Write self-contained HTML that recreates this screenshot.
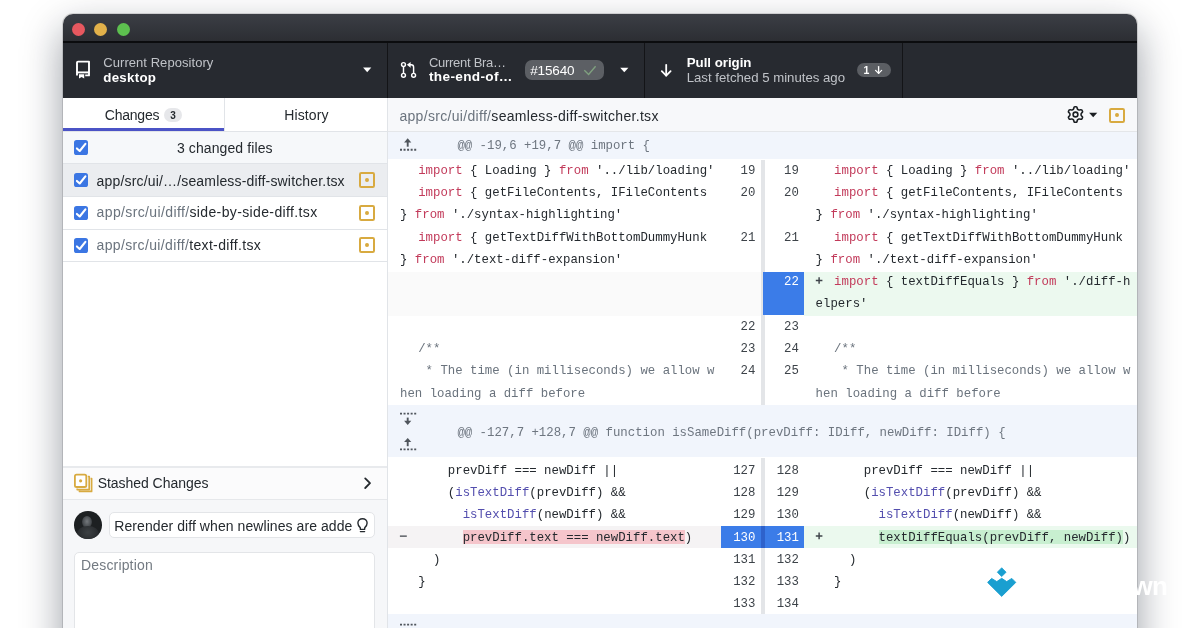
<!DOCTYPE html><html><head><meta charset="utf-8"><style>
html,body{margin:0;padding:0;background:#fff;width:1200px;height:628px;overflow:hidden;position:relative}
.t{position:absolute;white-space:pre;font-family:"Liberation Sans",sans-serif}
.m{font-family:"Liberation Mono",monospace}
.r{position:absolute}
svg{position:absolute;overflow:visible}
</style></head><body><div style="position:absolute;left:0;top:0;width:1200px;height:628px;overflow:hidden;will-change:transform">
<div class="r" style="left:63px;top:14px;width:1074px;height:700px;border-radius:10px 10px 0 0;box-shadow:0 0 0 1px rgba(0,0,0,0.12),0 16px 40px rgba(10,20,35,0.42);background:#fff"></div>
<div class="r" style="left:63px;top:14px;width:1074px;height:27px;border-radius:10px 10px 0 0;background:linear-gradient(#3b3e45,#2c2e33)"></div>
<div class="r" style="left:63.00px;top:41.00px;width:1074.00px;height:1.50px;background:#0b0c0e;"></div>
<div class="r" style="left:71.80px;top:22.90px;width:13px;height:13px;border-radius:50%;background:#e7585f"></div>
<div class="r" style="left:94.10px;top:22.90px;width:13px;height:13px;border-radius:50%;background:#e2b14a"></div>
<div class="r" style="left:116.50px;top:22.90px;width:13px;height:13px;border-radius:50%;background:#5dc04f"></div>
<div class="r" style="left:63.00px;top:42.50px;width:1074.00px;height:55.00px;background:#272a30;"></div>
<div class="r" style="left:386.50px;top:42.50px;width:1.00px;height:55.00px;background:#131417;"></div>
<div class="r" style="left:644.00px;top:42.50px;width:1.00px;height:55.00px;background:#131417;"></div>
<div class="r" style="left:902.00px;top:42.50px;width:1.00px;height:55.00px;background:#131417;"></div>
<div class="r" style="left:63.00px;top:97.50px;width:1074.00px;height:1.00px;background:#111215;"></div>
<svg style="left:0;top:0" width="1" height="1"><g fill="none" stroke="#fff" stroke-width="1.9" stroke-linejoin="round"><path d="M77 75.6 V62.6 Q77 61.6 78 61.6 H89 V75.4 H85.2"/><path d="M77 72.4 H89"/></g><path d="M79 74.2 H84.2 V78.6 L81.6 76.9 L79 78.6 Z" fill="#fff"/></svg>
<div class="t" style="left:103.30px;top:56.20px;font-size:13.00px;line-height:13.00px;color:#c0c3c8;font-weight:400;letter-spacing:0.053px;">Current Repository</div>
<div class="t" style="left:103.30px;top:70.84px;font-size:13.30px;line-height:13.30px;color:#fff;font-weight:700;letter-spacing:0.270px;">desktop</div>
<svg style="left:0;top:0" width="1" height="1"><path d="M363.10 67.60 L371.30 67.60 L367.20 72.20 Z" fill="#fff"/></svg>
<svg style="left:0;top:0" width="1" height="1"><g fill="none" stroke="#fff" stroke-width="1.45"><circle cx="403.5" cy="64.6" r="1.95"/><circle cx="403.5" cy="75.3" r="1.95"/><circle cx="413.6" cy="75.3" r="1.95"/><path d="M403.5 66.6 V73.3"/><path d="M413.6 73.3 V67.2 Q413.6 64.8 411.2 64.8 H409.6"/></g><path d="M406.9 64.8 L410.6 61.9 L410.6 67.7 Z" fill="#fff"/></svg>
<div class="t" style="left:429.00px;top:55.60px;font-size:13.00px;line-height:13.00px;color:#c0c3c8;font-weight:400;letter-spacing:-0.290px;">Current Bra…</div>
<div class="t" style="left:429.00px;top:70.49px;font-size:13.60px;line-height:13.60px;color:#fff;font-weight:700;letter-spacing:0.336px;">the-end-of…</div>
<div class="r" style="left:525px;top:60px;width:79px;height:20px;border-radius:7px;background:#5c5f64"></div>
<div class="t" style="left:530.20px;top:63.97px;font-size:13.50px;line-height:13.50px;color:#fff;font-weight:400;letter-spacing:-0.130px;">#15640</div>
<svg style="left:0;top:0" width="1" height="1"><path d="M584.3 70.3 L588.6 74.4 L595.6 66.2" fill="none" stroke="#7fa07f" stroke-width="1.4"/></svg>
<svg style="left:0;top:0" width="1" height="1"><path d="M620.20 67.70 L628.40 67.70 L624.30 72.30 Z" fill="#fff"/></svg>
<svg style="left:0;top:0" width="1" height="1"><g fill="none" stroke="#fff" stroke-width="1.8" stroke-linecap="round" stroke-linejoin="round"><path d="M666.2 64.8 V75.6"/><path d="M661.8 71.2 L666.2 75.6 L670.6 71.2"/></g></svg>
<div class="t" style="left:686.70px;top:56.24px;font-size:13.30px;line-height:13.30px;color:#fff;font-weight:700;letter-spacing:-0.020px;">Pull origin</div>
<div class="t" style="left:686.70px;top:70.73px;font-size:13.20px;line-height:13.20px;color:#c0c3c8;font-weight:400;letter-spacing:-0.002px;">Last fetched 5 minutes ago</div>
<div class="r" style="left:857.2px;top:62.9px;width:33.6px;height:14.2px;border-radius:8px;background:#5b5e63"></div>
<div class="t" style="left:863.60px;top:65.31px;font-size:10.50px;line-height:10.50px;color:#fff;font-weight:700;">1</div>
<svg style="left:0;top:0" width="1" height="1"><g fill="none" stroke="#fff" stroke-width="1.3" stroke-linecap="round" stroke-linejoin="round"><path d="M878.6 66.6 V73.4"/><path d="M875.6 70.4 L878.6 73.4 L881.6 70.4"/></g></svg>
<div class="r" style="left:63.00px;top:98.00px;width:324.00px;height:540.00px;background:#ffffff;"></div>
<div class="r" style="left:386.50px;top:98.00px;width:1.00px;height:540.00px;background:#e1e4e8;"></div>
<div class="r" style="left:224.30px;top:98.00px;width:1.00px;height:33.00px;background:#e1e4e8;"></div>
<div class="r" style="left:63.00px;top:130.50px;width:324.00px;height:1.00px;background:#e1e4e8;"></div>
<div class="r" style="left:63.00px;top:127.80px;width:161.00px;height:3.00px;background:#4b53c6;"></div>
<div class="t" style="left:104.80px;top:108.35px;font-size:14.00px;line-height:14.00px;color:#24292e;font-weight:400;letter-spacing:-0.224px;">Changes</div>
<div class="r" style="left:164.4px;top:108.4px;width:17.4px;height:13.6px;border-radius:7px;background:#e6e7ea"></div>
<div class="t" style="left:170.20px;top:111.13px;font-size:10.00px;line-height:10.00px;color:#24292e;font-weight:700;">3</div>
<div class="t" style="left:284.30px;top:108.35px;font-size:14.00px;line-height:14.00px;color:#24292e;font-weight:400;letter-spacing:0.090px;">History</div>
<div class="r" style="left:63.00px;top:131.50px;width:323.50px;height:32.00px;background:#f6f8fa;"></div>
<div class="r" style="left:63.00px;top:163.20px;width:323.50px;height:1.00px;background:#e1e4e8;"></div>
<div class="r" style="left:74.10px;top:140.30px;width:14px;height:14.4px;border-radius:2.6px;background:#3b76e3"></div>
<svg style="left:0;top:0" width="1" height="1"><path d="M76.90 148.40 L79.70 151.00 L85.40 143.90" fill="none" stroke="#fff" stroke-width="2.1" stroke-linecap="round" stroke-linejoin="round"/></svg>
<div class="t" style="left:176.90px;top:140.75px;font-size:14.00px;line-height:14.00px;color:#24292e;font-weight:400;letter-spacing:0.109px;">3 changed files</div>
<div class="r" style="left:63.00px;top:164.20px;width:323.50px;height:32.30px;background:#ebedf0;"></div>
<div class="r" style="left:63.00px;top:196.00px;width:323.50px;height:1.00px;background:#e1e4e8;"></div>
<div class="r" style="left:63.00px;top:228.50px;width:323.50px;height:1.00px;background:#e1e4e8;"></div>
<div class="r" style="left:63.00px;top:261.00px;width:323.50px;height:1.00px;background:#e1e4e8;"></div>
<div class="r" style="left:74.10px;top:172.80px;width:14px;height:14.4px;border-radius:2.6px;background:#3b76e3"></div>
<svg style="left:0;top:0" width="1" height="1"><path d="M76.90 180.90 L79.70 183.50 L85.40 176.40" fill="none" stroke="#fff" stroke-width="2.1" stroke-linecap="round" stroke-linejoin="round"/></svg>
<div class="t" style="left:96.60px;top:173.75px;font-size:14.00px;line-height:14.00px;font-weight:400;letter-spacing:0.166px;"><span style="color:#24292e">app/src/ui/…/seamless-diff-switcher.tsx</span></div>
<div class="r" style="left:358.60px;top:171.90px;width:16.80px;height:15.80px;box-sizing:border-box;border:2px solid #d8aa40;border-radius:2.2px"></div>
<div class="r" style="left:365.10px;top:177.90px;width:3.8px;height:3.8px;border-radius:50%;background:#d8aa40"></div>
<div class="r" style="left:74.10px;top:205.80px;width:14px;height:14.4px;border-radius:2.6px;background:#3b76e3"></div>
<svg style="left:0;top:0" width="1" height="1"><path d="M76.90 213.90 L79.70 216.50 L85.40 209.40" fill="none" stroke="#fff" stroke-width="2.1" stroke-linecap="round" stroke-linejoin="round"/></svg>
<div class="t" style="left:96.60px;top:205.45px;font-size:14.00px;line-height:14.00px;font-weight:400;letter-spacing:0.371px;"><span style="color:#6a737d">app/src/ui/diff/</span><span style="color:#24292e">side-by-side-diff.tsx</span></div>
<div class="r" style="left:358.60px;top:204.90px;width:16.80px;height:15.80px;box-sizing:border-box;border:2px solid #d8aa40;border-radius:2.2px"></div>
<div class="r" style="left:365.10px;top:210.90px;width:3.8px;height:3.8px;border-radius:50%;background:#d8aa40"></div>
<div class="r" style="left:74.10px;top:238.30px;width:14px;height:14.4px;border-radius:2.6px;background:#3b76e3"></div>
<svg style="left:0;top:0" width="1" height="1"><path d="M76.90 246.40 L79.70 249.00 L85.40 241.90" fill="none" stroke="#fff" stroke-width="2.1" stroke-linecap="round" stroke-linejoin="round"/></svg>
<div class="t" style="left:96.60px;top:237.75px;font-size:14.00px;line-height:14.00px;font-weight:400;letter-spacing:0.353px;"><span style="color:#6a737d">app/src/ui/diff/</span><span style="color:#24292e">text-diff.tsx</span></div>
<div class="r" style="left:358.60px;top:237.40px;width:16.80px;height:15.80px;box-sizing:border-box;border:2px solid #d8aa40;border-radius:2.2px"></div>
<div class="r" style="left:365.10px;top:243.40px;width:3.8px;height:3.8px;border-radius:50%;background:#d8aa40"></div>
<div class="r" style="left:63.00px;top:466.30px;width:323.50px;height:2.00px;background:#e8eaed;"></div>
<div class="r" style="left:63.00px;top:467.70px;width:323.50px;height:31.50px;background:#fbfbfc;"></div>
<div class="r" style="left:63.00px;top:499.00px;width:323.50px;height:1.00px;background:#e6e8eb;"></div>
<svg style="left:0;top:0" width="1" height="1"><g fill="none" stroke="#d8aa40" stroke-width="1.7" stroke-linejoin="round"><path d="M87.8 476.5 H89.2 V489.6 H77.2 V488.4"/><path d="M90.5 478.6 H91.6 V491.4 H79.5 V490.3"/></g><rect x="74.9" y="474.6" width="11.4" height="12.4" rx="1.6" fill="#fff" stroke="#d8aa40" stroke-width="1.8"/><circle cx="80.6" cy="480.8" r="1.6" fill="#d8aa40"/></svg>
<div class="t" style="left:97.70px;top:476.15px;font-size:14.00px;line-height:14.00px;color:#24292e;font-weight:400;letter-spacing:-0.043px;">Stashed Changes</div>
<svg style="left:0;top:0" width="1" height="1"><path d="M365.2 478.4 L370 483.2 L365.2 488" fill="none" stroke="#24292e" stroke-width="1.8" stroke-linecap="round" stroke-linejoin="round"/></svg>
<div class="r" style="left:63.00px;top:500.00px;width:323.50px;height:140.00px;background:#f6f7f9;"></div>
<div class="r" style="left:74px;top:511.2px;width:27.6px;height:27.6px;border-radius:50%;overflow:hidden;background:#1d2022"><div class="r" style="left:8px;top:5px;width:10px;height:12px;border-radius:50%;background:radial-gradient(ellipse at 50% 45%, #75797d 0, #4a4e52 55%, rgba(40,43,46,0) 100%)"></div><div class="r" style="left:3px;top:15px;width:22px;height:16px;border-radius:50%;background:radial-gradient(ellipse at 50% 40%, #3d4144 0, #2a2d30 60%, rgba(30,32,34,0) 100%)"></div></div>
<div class="r" style="left:109px;top:512px;width:266.4px;height:26.4px;box-sizing:border-box;border:1px solid #e3e5e8;border-radius:5px;background:#fff"></div>
<div class="t" style="left:114.30px;top:519.05px;font-size:14.00px;line-height:14.00px;color:#24292e;font-weight:400;letter-spacing:0.070px;">Rerender diff when newlines are adde</div>
<svg style="left:0;top:0" width="1" height="1"><g fill="none" stroke="#24292e" stroke-width="1.4" stroke-linecap="round"><path d="M360.2 527.6 C358.6 526.2 357.9 524.6 357.9 523 C357.9 520.3 360.1 518.7 362.5 518.7 C364.9 518.7 367.1 520.3 367.1 523 C367.1 524.6 366.4 526.2 364.8 527.6 L364.6 529.4 H360.4 Z"/><path d="M360.4 531.6 H364.6"/></g></svg>
<div class="r" style="left:74px;top:552px;width:301.4px;height:100px;box-sizing:border-box;border:1px solid #e3e5e8;border-radius:5px;background:#fff"></div>
<div class="t" style="left:81.00px;top:558.35px;font-size:14.00px;line-height:14.00px;color:#737a82;font-weight:400;letter-spacing:0.167px;">Description</div>
<div class="r" style="left:387.50px;top:98.00px;width:749.50px;height:33.00px;background:#f7f8fa;"></div>
<div class="r" style="left:387.50px;top:130.50px;width:749.50px;height:1.00px;background:#e4e6e9;"></div>
<div class="t" style="left:399.40px;top:108.85px;font-size:14.00px;line-height:14.00px;font-weight:400;letter-spacing:0.314px;"><span style="color:#6a737d">app/src/ui/diff/</span><span style="color:#24292e">seamless-diff-switcher.tsx</span></div>
<svg style="left:1066.8px;top:106.3px" width="17" height="17" viewBox="0 0 16 16"><path d="M8 0a8.2 8.2 0 0 1 .701.031C9.444.095 9.99.645 10.16 1.29l.288 1.107c.018.066.079.158.212.224.231.114.454.243.668.386.123.082.233.09.299.071l1.103-.303c.644-.176 1.392.021 1.82.63.27.385.506.792.704 1.218.315.675.111 1.422-.364 1.891l-.814.806c-.049.048-.098.147-.088.294.016.257.016.515 0 .772-.01.147.038.246.088.294l.814.806c.475.469.679 1.216.364 1.891a7.977 7.977 0 0 1-.704 1.217c-.428.61-1.176.807-1.82.63l-1.102-.302c-.067-.019-.177-.011-.3.071a5.909 5.909 0 0 1-.668.386c-.133.066-.194.158-.211.224l-.29 1.106c-.168.646-.715 1.196-1.458 1.26a8.006 8.006 0 0 1-1.402 0c-.743-.064-1.289-.614-1.458-1.26l-.289-1.106c-.018-.066-.079-.158-.212-.224a5.738 5.738 0 0 1-.668-.386c-.123-.082-.233-.09-.299-.071l-1.103.303c-.644.176-1.392-.021-1.820-.63a8.12 8.12 0 0 1-.704-1.218c-.315-.675-.111-1.422.363-1.891l.815-.806c.05-.048.098-.147.088-.294a6.214 6.214 0 0 1 0-.772c.01-.147-.038-.246-.088-.294l-.815-.806C.635 6.045.431 5.298.746 4.623a7.92 7.92 0 0 1 .704-1.217c.428-.61 1.176-.807 1.82-.63l1.102.302c.067.019.177.011.3-.071.214-.143.437-.272.668-.386.133-.066.194-.158.211-.224l.29-1.106C6.009.645 6.556.095 7.299.03 7.530.01 7.764 0 8 0Zm-.571 1.525c-.036.003-.108.036-.137.146l-.289 1.105c-.147.561-.549.967-.998 1.189-.173.086-.34.183-.5.29-.417.278-.97.423-1.529.27l-1.103-.303c-.109-.03-.175.016-.195.045-.22.312-.412.644-.573.99-.014.031-.021.11.059.19l.815.806c.411.406.562.957.53 1.456a4.709 4.709 0 0 0 0 .582c.032.499-.119 1.05-.53 1.456l-.815.806c-.081.08-.073.159-.059.19.162.346.353.677.573.989.02.03.085.076.195.046l1.102-.303c.56-.153 1.113-.008 1.530.27.161.107.328.204.501.29.447.222.85.629.997 1.189l.289 1.105c.029.109.101.143.137.146a6.6 6.6 0 0 0 1.142 0c.036-.003.108-.036.137-.146l.289-1.105c.147-.561.549-.967.998-1.189.173-.086.34-.183.5-.29.417-.278.97-.423 1.529-.27l1.103.303c.109.029.175-.016.195-.045.22-.313.411-.644.573-.99.014-.031.021-.11-.059-.19l-.815-.806c-.411-.406-.562-.957-.53-1.456a4.709 4.709 0 0 0 0-.582c-.032-.499.119-1.05.53-1.456l.815-.806c.081-.08.073-.159.059-.19a6.464 6.464 0 0 0-.573-.989c-.02-.03-.085-.076-.195-.046l-1.102.303c-.56.153-1.113.008-1.530-.27a4.44 4.44 0 0 0-.501-.29c-.447-.222-.85-.629-.997-1.189l-.289-1.105c-.029-.11-.101-.143-.137-.146a6.6 6.6 0 0 0-1.142 0ZM11 8a3 3 0 1 1-6 0 3 3 0 0 1 6 0ZM9.5 8a1.5 1.5 0 1 0-3.001.001A1.5 1.5 0 0 0 9.5 8Z" fill="#1b1f23"/></svg>
<svg style="left:0;top:0" width="1" height="1"><path d="M1089.10 112.70 L1097.30 112.70 L1093.20 117.30 Z" fill="#1b1f23"/></svg>
<div class="r" style="left:1109.00px;top:107.60px;width:16.00px;height:15.00px;box-sizing:border-box;border:2px solid #d8aa40;border-radius:2.2px"></div>
<div class="r" style="left:1115.10px;top:113.20px;width:3.8px;height:3.8px;border-radius:50%;background:#d8aa40"></div>
<div class="r" style="left:387.50px;top:131.50px;width:749.50px;height:27.20px;background:#f1f5fc;"></div>
<svg style="left:0;top:0" width="1" height="1"><path d="M407.70 141.20 V146.70" stroke="#50565d" stroke-width="1.9"/><path d="M404.10 142.40 L407.70 138.20 L411.30 142.40 Z" fill="#50565d"/></svg>
<svg style="left:0;top:0" width="1" height="1"><path d="M400.00 149.80 H416.20" stroke="#50565d" stroke-width="1.9" stroke-dasharray="2 1.55"/></svg>
<div class="t m" style="left:457.40px;top:139.84px;font-size:12.35px;line-height:12.35px;color:#24292e"><span style="color:#6e7680">@@ -19,6 +19,7 @@ import {</span></div>
<div class="r" style="left:760.50px;top:160.00px;width:4.00px;height:245.00px;background:#e3e5e8;"></div>
<div class="r" style="left:760.50px;top:457.50px;width:4.00px;height:156.90px;background:#e3e5e8;"></div>
<div class="r" style="left:387.50px;top:272.00px;width:373.00px;height:43.60px;background:#fafafa;"></div>
<div class="r" style="left:804.00px;top:271.50px;width:333.00px;height:44.60px;background:#ecf9ef;"></div>
<div class="r" style="left:762.70px;top:271.50px;width:41.30px;height:43.40px;background:#3b7ce8;"></div>
<div class="t m" style="left:740.59px;top:164.64px;font-size:12.35px;line-height:12.35px;color:#24292e"><span style="color:#3d4349">19</span></div>
<div class="t m" style="left:784.09px;top:164.64px;font-size:12.35px;line-height:12.35px;color:#24292e"><span style="color:#3d4349">19</span></div>
<div class="t m" style="left:418.20px;top:164.64px;font-size:12.35px;line-height:12.35px;color:#24292e"><span style="color:#c23a5a">import</span><span style="color:#24292e"> { Loading } </span><span style="color:#c23a5a">from</span><span style="color:#24292e"> &#x27;../lib/loading&#x27;</span></div>
<div class="t m" style="left:834.10px;top:164.64px;font-size:12.35px;line-height:12.35px;color:#24292e"><span style="color:#c23a5a">import</span><span style="color:#24292e"> { Loading } </span><span style="color:#c23a5a">from</span><span style="color:#24292e"> &#x27;../lib/loading&#x27;</span></div>
<div class="t m" style="left:740.59px;top:186.94px;font-size:12.35px;line-height:12.35px;color:#24292e"><span style="color:#3d4349">20</span></div>
<div class="t m" style="left:784.09px;top:186.94px;font-size:12.35px;line-height:12.35px;color:#24292e"><span style="color:#3d4349">20</span></div>
<div class="t m" style="left:418.20px;top:186.94px;font-size:12.35px;line-height:12.35px;color:#24292e"><span style="color:#c23a5a">import</span><span style="color:#24292e"> { getFileContents, IFileContents</span></div>
<div class="t m" style="left:834.10px;top:186.94px;font-size:12.35px;line-height:12.35px;color:#24292e"><span style="color:#c23a5a">import</span><span style="color:#24292e"> { getFileContents, IFileContents</span></div>
<div class="t m" style="left:400.00px;top:209.24px;font-size:12.35px;line-height:12.35px;color:#24292e"><span style="color:#24292e">} </span><span style="color:#c23a5a">from</span><span style="color:#24292e"> &#x27;./syntax-highlighting&#x27;</span></div>
<div class="t m" style="left:815.60px;top:209.24px;font-size:12.35px;line-height:12.35px;color:#24292e"><span style="color:#24292e">} </span><span style="color:#c23a5a">from</span><span style="color:#24292e"> &#x27;./syntax-highlighting&#x27;</span></div>
<div class="t m" style="left:740.59px;top:231.54px;font-size:12.35px;line-height:12.35px;color:#24292e"><span style="color:#3d4349">21</span></div>
<div class="t m" style="left:784.09px;top:231.54px;font-size:12.35px;line-height:12.35px;color:#24292e"><span style="color:#3d4349">21</span></div>
<div class="t m" style="left:418.20px;top:231.54px;font-size:12.35px;line-height:12.35px;color:#24292e"><span style="color:#c23a5a">import</span><span style="color:#24292e"> { getTextDiffWithBottomDummyHunk</span></div>
<div class="t m" style="left:834.10px;top:231.54px;font-size:12.35px;line-height:12.35px;color:#24292e"><span style="color:#c23a5a">import</span><span style="color:#24292e"> { getTextDiffWithBottomDummyHunk</span></div>
<div class="t m" style="left:400.00px;top:253.84px;font-size:12.35px;line-height:12.35px;color:#24292e"><span style="color:#24292e">} </span><span style="color:#c23a5a">from</span><span style="color:#24292e"> &#x27;./text-diff-expansion&#x27;</span></div>
<div class="t m" style="left:815.60px;top:253.84px;font-size:12.35px;line-height:12.35px;color:#24292e"><span style="color:#24292e">} </span><span style="color:#c23a5a">from</span><span style="color:#24292e"> &#x27;./text-diff-expansion&#x27;</span></div>
<div class="t m" style="left:784.09px;top:276.14px;font-size:12.35px;line-height:12.35px;color:#24292e"><span style="color:#ffffff">22</span></div>
<div class="t m" style="left:834.10px;top:276.14px;font-size:12.35px;line-height:12.35px;color:#24292e"><span style="color:#c23a5a">import</span><span style="color:#24292e"> { textDiffEquals } </span><span style="color:#c23a5a">from</span><span style="color:#24292e"> &#x27;./diff-h</span></div>
<svg style="left:0;top:0" width="1" height="1"><path d="M815.8 280.50 H822.4 M819.1 277.20 V283.80" stroke="#3f444a" stroke-width="1.45"/></svg>
<div class="t m" style="left:815.60px;top:298.44px;font-size:12.35px;line-height:12.35px;color:#24292e"><span style="color:#24292e">elpers&#x27;</span></div>
<div class="t m" style="left:740.59px;top:320.74px;font-size:12.35px;line-height:12.35px;color:#24292e"><span style="color:#3d4349">22</span></div>
<div class="t m" style="left:784.09px;top:320.74px;font-size:12.35px;line-height:12.35px;color:#24292e"><span style="color:#3d4349">23</span></div>
<div class="t m" style="left:740.59px;top:343.04px;font-size:12.35px;line-height:12.35px;color:#24292e"><span style="color:#3d4349">23</span></div>
<div class="t m" style="left:784.09px;top:343.04px;font-size:12.35px;line-height:12.35px;color:#24292e"><span style="color:#3d4349">24</span></div>
<div class="t m" style="left:418.20px;top:343.04px;font-size:12.35px;line-height:12.35px;color:#24292e"><span style="color:#6a737d">/**</span></div>
<div class="t m" style="left:834.10px;top:343.04px;font-size:12.35px;line-height:12.35px;color:#24292e"><span style="color:#6a737d">/**</span></div>
<div class="t m" style="left:740.59px;top:365.34px;font-size:12.35px;line-height:12.35px;color:#24292e"><span style="color:#3d4349">24</span></div>
<div class="t m" style="left:784.09px;top:365.34px;font-size:12.35px;line-height:12.35px;color:#24292e"><span style="color:#3d4349">25</span></div>
<div class="t m" style="left:418.20px;top:365.34px;font-size:12.35px;line-height:12.35px;color:#24292e"><span style="color:#6a737d"> * The time (in milliseconds) we allow w</span></div>
<div class="t m" style="left:834.10px;top:365.34px;font-size:12.35px;line-height:12.35px;color:#24292e"><span style="color:#6a737d"> * The time (in milliseconds) we allow w</span></div>
<div class="t m" style="left:400.00px;top:387.64px;font-size:12.35px;line-height:12.35px;color:#24292e"><span style="color:#6a737d">hen loading a diff before</span></div>
<div class="t m" style="left:815.60px;top:387.64px;font-size:12.35px;line-height:12.35px;color:#24292e"><span style="color:#6a737d">hen loading a diff before</span></div>
<div class="r" style="left:387.50px;top:404.80px;width:749.50px;height:52.70px;background:#f1f5fc;"></div>
<svg style="left:0;top:0" width="1" height="1"><path d="M400.00 413.60 H416.20" stroke="#50565d" stroke-width="1.9" stroke-dasharray="2 1.55"/></svg>
<svg style="left:0;top:0" width="1" height="1"><path d="M407.70 417.60 V422.00" stroke="#50565d" stroke-width="1.9"/><path d="M404.10 420.80 L407.70 425.00 L411.30 420.80 Z" fill="#50565d"/></svg>
<svg style="left:0;top:0" width="1" height="1"><path d="M407.70 440.90 V446.20" stroke="#50565d" stroke-width="1.9"/><path d="M404.10 442.10 L407.70 437.90 L411.30 442.10 Z" fill="#50565d"/></svg>
<svg style="left:0;top:0" width="1" height="1"><path d="M400.00 449.40 H416.20" stroke="#50565d" stroke-width="1.9" stroke-dasharray="2 1.55"/></svg>
<div class="t m" style="left:457.40px;top:426.74px;font-size:12.35px;line-height:12.35px;color:#24292e"><span style="color:#6e7680">@@ -127,7 +128,7 @@ function isSameDiff(prevDiff: IDiff, newDiff: IDiff) {</span></div>
<div class="r" style="left:387.50px;top:526.00px;width:333.50px;height:22.30px;background:#f5f3f4;"></div>
<div class="r" style="left:462.64px;top:529.90px;width:222.22px;height:13.90px;background:#f5c5cb;"></div>
<div class="r" style="left:804.00px;top:526.00px;width:333.00px;height:22.30px;background:#ebf9ee;"></div>
<div class="r" style="left:878.54px;top:529.90px;width:244.45px;height:13.90px;background:#c8efd0;"></div>
<div class="r" style="left:721.00px;top:526.40px;width:39.50px;height:21.50px;background:#3b7ce8;"></div>
<div class="r" style="left:760.50px;top:526.40px;width:4.00px;height:21.50px;background:#2e62cc;"></div>
<div class="r" style="left:764.50px;top:526.40px;width:39.50px;height:21.50px;background:#3b7ce8;"></div>
<div class="t m" style="left:733.18px;top:464.64px;font-size:12.35px;line-height:12.35px;color:#24292e"><span style="color:#3d4349">127</span></div>
<div class="t m" style="left:776.68px;top:464.64px;font-size:12.35px;line-height:12.35px;color:#24292e"><span style="color:#3d4349">128</span></div>
<div class="t m" style="left:418.20px;top:464.64px;font-size:12.35px;line-height:12.35px;color:#24292e"><span style="color:#24292e">    prevDiff === newDiff ||</span></div>
<div class="t m" style="left:834.10px;top:464.64px;font-size:12.35px;line-height:12.35px;color:#24292e"><span style="color:#24292e">    prevDiff === newDiff ||</span></div>
<div class="t m" style="left:733.18px;top:486.94px;font-size:12.35px;line-height:12.35px;color:#24292e"><span style="color:#3d4349">128</span></div>
<div class="t m" style="left:776.68px;top:486.94px;font-size:12.35px;line-height:12.35px;color:#24292e"><span style="color:#3d4349">129</span></div>
<div class="t m" style="left:418.20px;top:486.94px;font-size:12.35px;line-height:12.35px;color:#24292e"><span style="color:#24292e">    (</span><span style="color:#534eae">isTextDiff</span><span style="color:#24292e">(prevDiff) &amp;&amp;</span></div>
<div class="t m" style="left:834.10px;top:486.94px;font-size:12.35px;line-height:12.35px;color:#24292e"><span style="color:#24292e">    (</span><span style="color:#534eae">isTextDiff</span><span style="color:#24292e">(prevDiff) &amp;&amp;</span></div>
<div class="t m" style="left:733.18px;top:509.24px;font-size:12.35px;line-height:12.35px;color:#24292e"><span style="color:#3d4349">129</span></div>
<div class="t m" style="left:776.68px;top:509.24px;font-size:12.35px;line-height:12.35px;color:#24292e"><span style="color:#3d4349">130</span></div>
<div class="t m" style="left:418.20px;top:509.24px;font-size:12.35px;line-height:12.35px;color:#24292e"><span style="color:#24292e">      </span><span style="color:#534eae">isTextDiff</span><span style="color:#24292e">(newDiff) &amp;&amp;</span></div>
<div class="t m" style="left:834.10px;top:509.24px;font-size:12.35px;line-height:12.35px;color:#24292e"><span style="color:#24292e">      </span><span style="color:#534eae">isTextDiff</span><span style="color:#24292e">(newDiff) &amp;&amp;</span></div>
<div class="t m" style="left:733.18px;top:531.54px;font-size:12.35px;line-height:12.35px;color:#24292e"><span style="color:#fff">130</span></div>
<div class="t m" style="left:776.68px;top:531.54px;font-size:12.35px;line-height:12.35px;color:#24292e"><span style="color:#fff">131</span></div>
<div class="t m" style="left:418.20px;top:531.54px;font-size:12.35px;line-height:12.35px;color:#24292e"><span style="color:#24292e">      prevDiff.text === newDiff.text)</span></div>
<div class="t m" style="left:834.10px;top:531.54px;font-size:12.35px;line-height:12.35px;color:#24292e"><span style="color:#24292e">      textDiffEquals(prevDiff, newDiff))</span></div>
<svg style="left:0;top:0" width="1" height="1"><path d="M399.9 536.10 H406.8 M815.8 535.90 H822.4 M819.1 532.60 V539.20" stroke="#3f444a" stroke-width="1.45"/></svg>
<div class="t m" style="left:733.18px;top:553.84px;font-size:12.35px;line-height:12.35px;color:#24292e"><span style="color:#3d4349">131</span></div>
<div class="t m" style="left:776.68px;top:553.84px;font-size:12.35px;line-height:12.35px;color:#24292e"><span style="color:#3d4349">132</span></div>
<div class="t m" style="left:418.20px;top:553.84px;font-size:12.35px;line-height:12.35px;color:#24292e"><span style="color:#24292e">  )</span></div>
<div class="t m" style="left:834.10px;top:553.84px;font-size:12.35px;line-height:12.35px;color:#24292e"><span style="color:#24292e">  )</span></div>
<div class="t m" style="left:733.18px;top:576.14px;font-size:12.35px;line-height:12.35px;color:#24292e"><span style="color:#3d4349">132</span></div>
<div class="t m" style="left:776.68px;top:576.14px;font-size:12.35px;line-height:12.35px;color:#24292e"><span style="color:#3d4349">133</span></div>
<div class="t m" style="left:418.20px;top:576.14px;font-size:12.35px;line-height:12.35px;color:#24292e"><span style="color:#24292e">}</span></div>
<div class="t m" style="left:834.10px;top:576.14px;font-size:12.35px;line-height:12.35px;color:#24292e"><span style="color:#24292e">}</span></div>
<div class="t m" style="left:733.18px;top:598.44px;font-size:12.35px;line-height:12.35px;color:#24292e"><span style="color:#3d4349">133</span></div>
<div class="t m" style="left:776.68px;top:598.44px;font-size:12.35px;line-height:12.35px;color:#24292e"><span style="color:#3d4349">134</span></div>
<div class="r" style="left:387.50px;top:614.40px;width:749.50px;height:33.60px;background:#f1f5fc;"></div>
<svg style="left:0;top:0" width="1" height="1"><path d="M400.00 624.60 H416.20" stroke="#50565d" stroke-width="1.9" stroke-dasharray="2 1.55"/></svg>
<svg style="left:0;top:0" width="1" height="1"><g fill="#1a9fd0"><path d="M1001.7 567.8 L1006.1 572.2 L1001.7 576.6 L997.3 572.2 Z" stroke="#1a9fd0" stroke-width="0.8" stroke-linejoin="round"/><path d="M987.6 582.4 L991.6 578.4 L996.8 581.6 L1001.7 578.3 L1006.7 581.6 L1011.8 578.4 L1015.8 582.4 L1001.7 596.4 Z" stroke="#1a9fd0" stroke-width="0.9" stroke-linejoin="round"/></g></svg>
<div class="t" style="left:1132.50px;top:573.49px;font-size:26.00px;line-height:26.00px;color:#ffffff;font-weight:700;letter-spacing:-0.8px;">wn</div>
</div></body></html>
